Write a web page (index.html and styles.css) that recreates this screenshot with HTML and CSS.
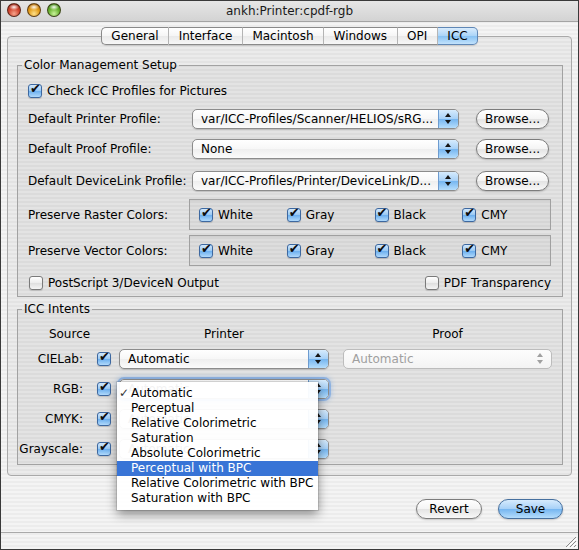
FILE: index.html
```html
<!DOCTYPE html>
<html>
<head>
<meta charset="utf-8">
<title>ankh:Printer:cpdf-rgb</title>
<link rel="stylesheet" href="styles.css">
</head>
<body>
<div class="window">
  <div class="titlebar">
    <div class="lights"><span class="light red"></span><span class="light yellow"></span><span class="light green"></span></div>
    <div class="title">ankh:Printer:cpdf-rgb</div>
    <div></div>
  </div>
  <div class="body">
    <div class="tabs">
      <span class="tab first">General</span><span class="tab">Interface</span><span class="tab">Macintosh</span><span class="tab">Windows</span><span class="tab">OPI</span><span class="tab last sel">ICC</span>
    </div>
    <div class="panel">
      <fieldset class="group cms">
        <legend>Color Management Setup</legend>
        <div class="row check-row"><span class="cb on"></span><span>Check ICC Profiles for Pictures</span></div>
        <div class="row prof-row r1"><span class="plabel">Default Printer Profile:</span><div class="popup wide"><span class="ptext">var/ICC-Profiles/Scanner/HELIOS/sRG...</span><span class="parrows"></span></div><span class="btn browse">Browse...</span></div>
        <div class="row prof-row r2"><span class="plabel">Default Proof Profile:</span><div class="popup wide"><span class="ptext">None</span><span class="parrows"></span></div><span class="btn browse">Browse...</span></div>
        <div class="row prof-row r3"><span class="plabel">Default DeviceLink Profile:</span><div class="popup wide"><span class="ptext">var/ICC-Profiles/Printer/DeviceLink/D...</span><span class="parrows"></span></div><span class="btn browse">Browse...</span></div>
        <div class="row preserve p1"><span class="plabel">Preserve Raster Colors:</span><div class="pbox"><span class="opt"><span class="cb on"></span>White</span><span class="opt"><span class="cb on"></span>Gray</span><span class="opt"><span class="cb on"></span>Black</span><span class="opt"><span class="cb on"></span>CMY</span></div></div>
        <div class="row preserve p2"><span class="plabel">Preserve Vector Colors:</span><div class="pbox"><span class="opt"><span class="cb on"></span>White</span><span class="opt"><span class="cb on"></span>Gray</span><span class="opt"><span class="cb on"></span>Black</span><span class="opt"><span class="cb on"></span>CMY</span></div></div>
        <div class="row bottom-opts"><span class="opt"><span class="cb"></span>PostScript 3/DeviceN Output</span><span class="opt"><span class="cb"></span>PDF Transparency</span></div>
      </fieldset>
      <fieldset class="group icc">
        <legend>ICC Intents</legend>
        <div class="grid">
          <div class="h src">Source</div><div class="h prn">Printer</div><div class="h prf">Proof</div>
          <div class="lab">CIELab:</div><span class="cb on"></span><div class="popup pp"><span class="ptext">Automatic</span><span class="parrows"></span></div><div class="popup pf disabled"><span class="ptext">Automatic</span><span class="parrows"></span></div>
          <div class="lab">RGB:</div><span class="cb on"></span><div class="popup pp focus"><span class="ptext">Automatic</span><span class="parrows"></span></div><div></div>
          <div class="lab">CMYK:</div><span class="cb on"></span><div class="popup pp"><span class="ptext">Automatic</span><span class="parrows"></span></div><div></div>
          <div class="lab">Grayscale:</div><span class="cb on"></span><div class="popup pp"><span class="ptext">Automatic</span><span class="parrows"></span></div><div></div>
        </div>
      </fieldset>
    </div>
    <div class="buttons"><span class="btn revert">Revert</span><span class="btn save">Save</span></div>
  </div>
  <div class="status">
    <svg class="grip" width="12" height="12" viewBox="0 0 12 12"><path d="M11 1 L1 11 M11 5 L5 11 M11 9 L9 11" stroke="#8a8a8a" stroke-width="1"/><path d="M12 2 L2 12 M12 6 L6 12 M12 10 L10 12" stroke="#ffffff" stroke-width="1"/></svg>
  </div>
  <div class="menu">
    <div class="mi checked">Automatic</div>
    <div class="mi">Perceptual</div>
    <div class="mi">Relative Colorimetric</div>
    <div class="mi">Saturation</div>
    <div class="mi">Absolute Colorimetric</div>
    <div class="mi hl">Perceptual with BPC</div>
    <div class="mi">Relative Colorimetric with BPC</div>
    <div class="mi">Saturation with BPC</div>
  </div>
</div>
</body>
</html>
```
FILE: styles.css
```css
* { box-sizing: border-box; }
html, body { margin: 0; padding: 0; background: #fff; }
body { font-family: "DejaVu Sans", "Liberation Sans", sans-serif; font-size: 12px; color: #000; }

.window {
  position: relative;
  width: 579px; height: 550px;
  border: 1px solid #3a3a3a;
  display: flex; flex-direction: column;
  background: repeating-linear-gradient(to bottom, #ececec 0, #ececec 2px, #f4f4f4 2px, #f4f4f4 4px);
  overflow: hidden;
}

/* title bar */
.titlebar {
  flex: none; height: 21px;
  display: grid; grid-template-columns: 1fr auto 1fr; align-items: center;
  background: linear-gradient(#e6e6e6, #d3d3d3);
  border-bottom: 1px solid #a4a4a4;
}
.lights { display: flex; gap: 6px; margin-left: 6px; align-self: start; margin-top: 2px; }
.light {
  width: 14px; height: 14px; border-radius: 50%;
  border: 1px solid rgba(40,20,10,0.65);
}
.red {
  background:
    radial-gradient(ellipse 5px 3px at 50% 26%, rgba(255,255,255,0.95), rgba(255,255,255,0) 100%),
    radial-gradient(circle at 50% 80%, #f6a58c 0, #d0432d 50%, #8d1e12 100%);
}
.yellow {
  background:
    radial-gradient(ellipse 5px 3px at 50% 26%, rgba(255,255,255,0.95), rgba(255,255,255,0) 100%),
    radial-gradient(circle at 50% 80%, #fde08a 0, #e29a16 50%, #9c5a05 100%);
}
.green {
  background:
    radial-gradient(ellipse 5px 3px at 50% 26%, rgba(255,255,255,0.95), rgba(255,255,255,0) 100%),
    radial-gradient(circle at 50% 80%, #c9f29a 0, #68b22f 50%, #2f6d10 100%);
}
.title { font-size: 12px; color: #1a1a1a; white-space: nowrap; }

/* tabs */
.body { flex: 1; display: flex; flex-direction: column; }
.tabs {
  position: relative; z-index: 2;
  display: flex; justify-content: center;
  margin-top: 5px; height: 18px;
}
.tab {
  height: 18px; line-height: 16px; padding: 0 9.5px;
  border-top: 1px solid #8a8a8a; border-bottom: 1px solid #8a8a8a;
  border-right: 1px solid #b8b8b8;
  background: linear-gradient(#ffffff, #f5f5f5 50%, #e9e9e9 50%, #f7f7f7);
  box-shadow: 0 1px 1px rgba(0,0,0,0.12);
  white-space: nowrap;
}
.tab.first { border-left: 1px solid #8a8a8a; border-radius: 5px 0 0 5px; }
.tab.last { border-right: 1px solid #8a8a8a; border-radius: 0 5px 5px 0; }
.tab.sel {
  border-color: #5f87b6;
  background: linear-gradient(#d9ecfd, #aad4f8 50%, #86c1f3 50%, #c2e2fc);
}

/* panel */
.panel {
  margin: -9px 6px 0;
  border: 1px solid #a9a9a9; border-radius: 4px;
  background: rgba(0,0,0,0.035);
  padding: 20px 8px 10px 9px;
}
.group {
  margin: 0; padding: 0; min-width: 0;
  border: 1px solid #a2a2a2;
  background: rgba(0,0,0,0.03);
}
.group legend { padding: 0 2px; margin-left: 4px; line-height: 16px; }
.cms { padding-bottom: 4px; }

.row { display: flex; align-items: center; padding-left: 10px; }
.check-row { margin-top: 9px; height: 18px; gap: 5px; }
.prof-row { height: 20px; }
.r1 { margin-top: 9px; }
.r2 { margin-top: 10px; }
.r3 { margin-top: 12px; }
.plabel { width: 164px; flex: none; white-space: nowrap; }
.popup.wide { width: 267px; }
.browse { margin-left: 17px; width: 73px; height: 19px; }

.preserve { height: 31px; }
.p1 { margin-top: 8px; }
.p2 { margin-top: 5px; }
.plabel + .pbox { margin-left: -3px; }
.pbox {
  width: 362px; height: 31px;
  border: 1px solid #a0a0a0;
  background: rgba(0,0,0,0.025);
  box-shadow: inset 0 1px 1px rgba(0,0,0,0.06);
  display: flex; align-items: center; padding-left: 9px;
}
.pbox .opt { width: 89px; }
.opt { display: flex; align-items: center; gap: 5px; white-space: nowrap; }
.bottom-opts { height: 18px; margin-top: 8px; justify-content: space-between; padding-right: 11px; padding-left: 11px; }

/* checkbox */
.cb {
  position: relative; flex: none;
  width: 14px; height: 14px;
  border: 1px solid #7a7a7a; border-radius: 3px;
  background: linear-gradient(#ffffff, #ececec 50%, #dedede 50%, #f5f5f5);
  box-shadow: 0 1px 1px rgba(0,0,0,0.15);
}
.cb.on {
  border-color: #3d68a0;
  background: linear-gradient(#d2e8fc, #97c7f2 50%, #6aaeee 50%, #b0d9fb);
}
.cb.on::after {
  content: "\2714";
  position: absolute; left: 1px; top: -3px;
  font-size: 13px; line-height: 1; color: #0d0d0d;
}

/* popup */
.popup {
  display: flex; height: 20px;
  border: 1px solid #8c8c8c; border-radius: 5px;
  background: linear-gradient(#ffffff, #f7f7f7 50%, #eeeeee 50%, #fbfbfb);
  box-shadow: 0 1px 1px rgba(0,0,0,0.15);
  overflow: hidden;
}
.ptext { flex: 1; min-width: 0; padding-left: 8px; line-height: 18px; white-space: nowrap; overflow: hidden; }
.parrows {
  position: relative; flex: none; width: 20px;
  border-left: 1px solid #6d9bcf;
  background: linear-gradient(#d6ebfd, #a6d0f7 50%, #74b5f0 50%, #b5ddfc);
}
.parrows::before, .parrows::after {
  content: ""; position: absolute; left: 6px;
  border-left: 3px solid transparent; border-right: 3px solid transparent;
}
.parrows::before { top: 3px; border-bottom: 4px solid #141414; }
.parrows::after { top: 10px; border-top: 4px solid #141414; }
.popup.disabled {
  border-color: #bcbcbc; color: #a0a0a0; box-shadow: none;
  background: linear-gradient(#fdfdfd, #f3f3f3);
}
.popup.disabled .parrows { background: none; border-left: none; }
.popup.disabled .parrows::before { border-bottom-color: #a0a0a0; }
.popup.disabled .parrows::after { border-top-color: #a0a0a0; }
.popup.focus { box-shadow: 0 0 0 2px rgba(100,155,225,0.55), 0 0 4px 3px rgba(100,155,225,0.3); }

/* buttons */
.btn {
  display: inline-flex; align-items: center; justify-content: center;
  height: 20px; border: 1px solid #7c7c7c; border-radius: 10px;
  background: linear-gradient(#ffffff, #f4f4f4 50%, #e3e3e3 50%, #f8f8f8);
  box-shadow: 0 1px 2px rgba(0,0,0,0.2);
  white-space: nowrap;
}
.buttons { display: flex; justify-content: flex-end; gap: 16px; margin-top: 23px; padding-right: 15px; }
.revert { width: 66px; }
.save {
  width: 65px; border-color: #46709f;
  background: linear-gradient(#d6ebfd, #a6d0f7 50%, #74b5f0 50%, #b5ddfc);
}

/* ICC grid */
.icc { margin-top: 4px; }
.grid {
  display: grid;
  grid-template-columns: 74px 27px 224px 209px;
  grid-template-rows: 20px repeat(4, 30px);
  align-items: center;
  margin-top: 7px;
}
.h { text-align: center; }
.h.src { grid-column: 1 / 3; padding-left: 2px; }
.h.prn { width: 210px; }
.lab { text-align: right; padding-right: 9px; white-space: nowrap; }
.grid .cb { margin-left: 5px; }
.popup.pp { width: 210px; }
.popup.pf { width: 209px; }

/* status bar */
.status {
  flex: none; height: 17px;
  border-top: 1px solid #a9a9a9;
  display: flex; justify-content: flex-end; align-items: flex-end;
}
.grip { display: block; margin: 0 1px 1px 0; }

/* menu */
.menu {
  position: absolute; left: 116px; top: 381px; z-index: 5;
  width: 201px; padding: 4px 0;
  background: rgba(255,255,255,0.95);
  box-shadow: 0 4px 10px rgba(0,0,0,0.45), 0 0 0 1px rgba(0,0,0,0.1);
}
.mi { position: relative; height: 15px; line-height: 15px; padding-left: 14px; white-space: nowrap; }
.mi.checked::before { content: "\2713"; position: absolute; left: 2px; top: 0; color: #333; font-size: 12px; }
.mi.hl { background: #3874d6; color: #fff; }
```
